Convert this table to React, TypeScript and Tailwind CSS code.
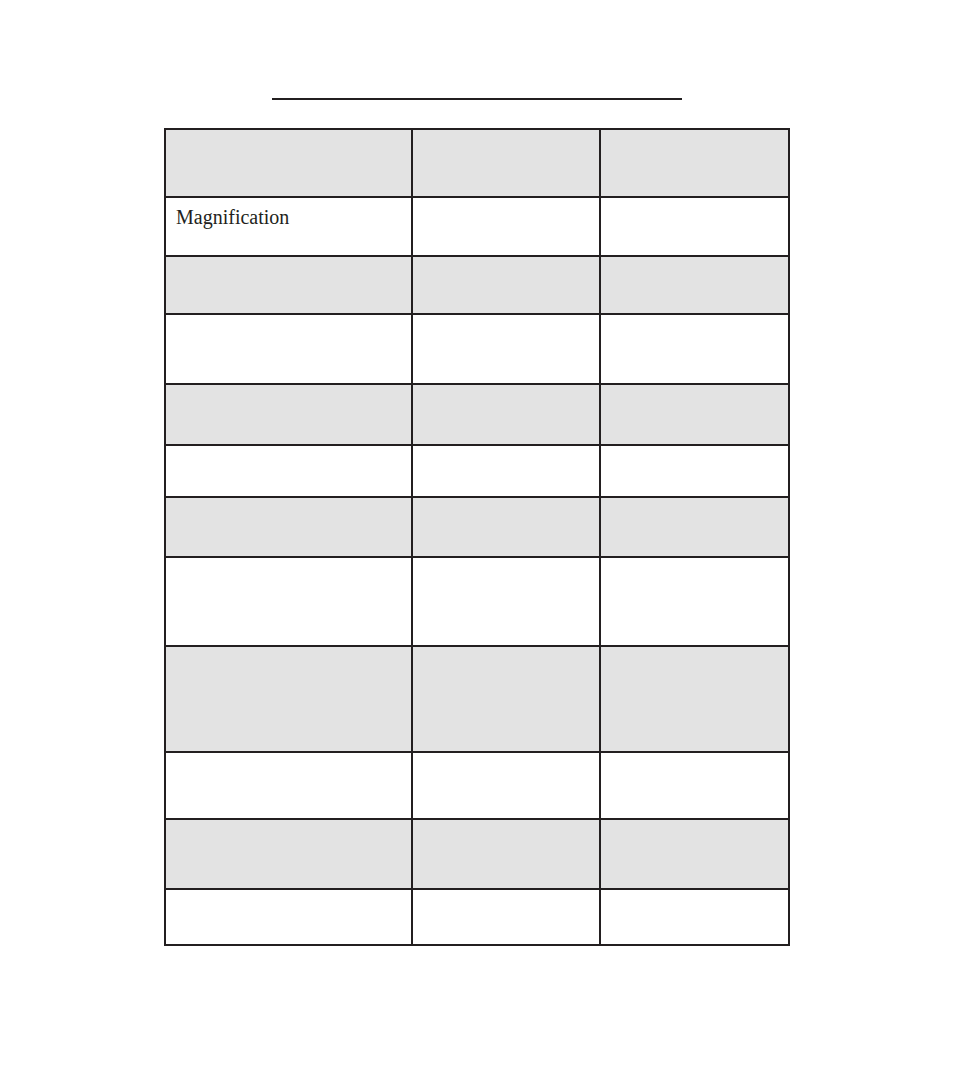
const ROWS: { h: number; shaded: boolean; label?: string }[] = [
  { h: 68, shaded: true },
  { h: 59, shaded: false, label: 'Magnification' },
  { h: 58, shaded: true },
  { h: 70, shaded: false },
  { h: 61, shaded: true },
  { h: 52, shaded: false },
  { h: 60, shaded: true },
  { h: 89, shaded: false },
  { h: 106, shaded: true },
  { h: 67, shaded: false },
  { h: 70, shaded: true },
  { h: 56, shaded: false },
];

export default function App() {
  return (
    <div
      className="min-h-[1067px] bg-white flex flex-col items-center pt-[98px] text-[#231f20]"
      style={{ fontFamily: '"Liberation Serif", "Times New Roman", serif' }}
    >
      <div className="w-[410px] h-[2px] bg-[#231f20]" />

      <div className="mt-[28px] grid grid-cols-[247px_188px_189px] border-l-2 border-t-2 border-[#231f20]">
        {ROWS.map((row, i) =>
          [0, 1, 2].map(col => (
            <div
              key={`${i}-${col}`}
              className={`border-r-2 border-b-2 border-[#231f20] ${row.shaded ? 'bg-[#e3e3e3]' : 'bg-white'}`}
              style={{ height: row.h }}
            >
              {col === 0 && row.label && (
                <div className="pl-[10px] pt-[8px] text-[20px] leading-[22px]">{row.label}</div>
              )}
            </div>
          ))
        )}
      </div>
    </div>
  );
}
